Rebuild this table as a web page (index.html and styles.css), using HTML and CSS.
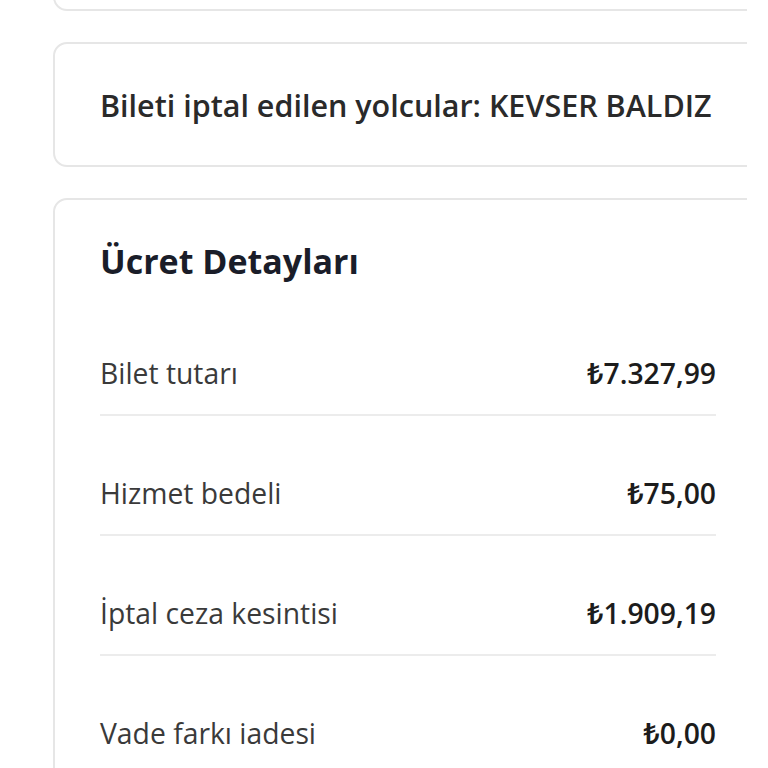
FILE: index.html
```html
<!DOCTYPE html>
<html lang="tr">
<head>
<meta charset="utf-8">
<title>Ücret Detayları</title>
<link rel="stylesheet" href="styles.css">
</head>
<body>
<div class="page">
  <div class="card card-top"></div>
  <div class="card card-passengers">
    <p class="passengers">Bileti iptal edilen yolcular: KEVSER BALDIZ</p>
  </div>
  <div class="card card-fees">
    <h2 class="fees-title">Ücret Detayları</h2>
    <div class="fee-row"><span class="fee-label">Bilet tutarı</span><span class="fee-value">₺7.327,99</span></div>
    <div class="fee-row"><span class="fee-label">Hizmet bedeli</span><span class="fee-value">₺75,00</span></div>
    <div class="fee-row"><span class="fee-label">İptal ceza kesintisi</span><span class="fee-value">₺1.909,19</span></div>
    <div class="fee-row"><span class="fee-label">Vade farkı iadesi</span><span class="fee-value">₺0,00</span></div>
  </div>
</div>
</body>
</html>
```

FILE: styles.css
```css
html, body {
  margin: 0;
  padding: 0;
  background: #ffffff;
}
body {
  font-family: "Open Sans", "Noto Sans", sans-serif;
  color: #2b2b2b;
  overflow: hidden;
  height: 768px;
}
.page {
  width: 747px;
  overflow: hidden;
  display: flex;
  flex-direction: column;
  gap: 31px;
  padding-left: 53px;
  box-sizing: border-box;
}
.card {
  width: 740px;
  box-sizing: border-box;
  border: 2px solid #e6e6e6;
  border-radius: 14px;
  background: #fff;
}
.card-top {
  height: 60px;
  margin-top: -49px;
}
.card-passengers {
  height: 125px;
  display: flex;
  align-items: center;
  padding-left: 45px;
}
.passengers {
  margin: 0;
  font-size: 30.5px;
  font-weight: 600;
  color: #2a2a2a;
  line-height: 40px;
}
.card-fees {
  padding: 39px 0 0 45px;
  height: 700px;
}
.fees-title {
  margin: 0 0 70px;
  font-size: 34px;
  font-weight: 700;
  color: #1a1d29;
  line-height: 44px;
}
.fee-row {
  width: 616px;
  display: flex;
  justify-content: space-between;
  align-items: baseline;
  padding: 57px 0 21px;
  border-bottom: 2px solid #ececec;
  font-size: 28.3px;
  line-height: 40px;
}
.fee-row:first-of-type {
  padding-top: 0;
}
.fee-label {
  color: #3a3a3a;
  font-weight: 400;
}
.fee-value {
  color: #1c1c1c;
  font-weight: 600;
}
```
